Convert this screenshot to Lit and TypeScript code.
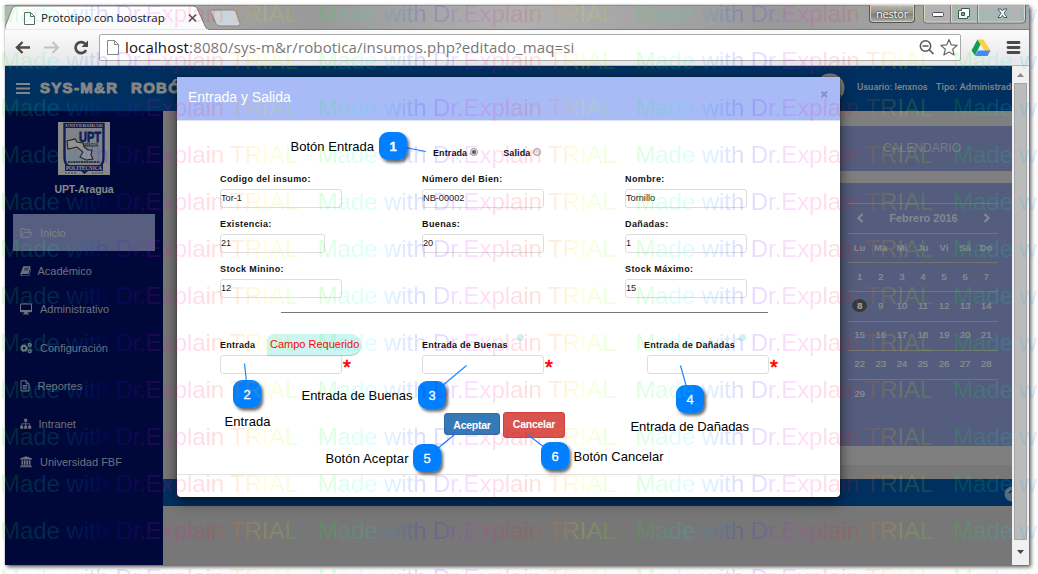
import { LitElement, html, svg, css } from "lit";
import { customElement } from "lit/decorators.js";

const MENU = [
  { t: "Inicio", i: "folder", cls: "active" },
  { t: "Académico", i: "book", cls: "tight" },
  { t: "Administrativo", i: "desktop", cls: "" },
  { t: "Configuración", i: "cogs", cls: "" },
  { t: "Reportes", i: "file", cls: "tight" },
  { t: "Intranet", i: "sitemap", cls: "snug" },
  { t: "Universidad FBF", i: "bank", cls: "" },
];

const ICONS: Record<string, unknown> = {
  folder: svg`<path d="M1 9.6V2.6q0-1 1-1h2.3q.8 0 .8 1h3.700q.9 0 .9 1V5M1.200 10.200h7.400q.7 0 1.100-.6l2-3.600q.3-.7-.4-.7H4.600q-.7 0-1.100.6L1 9.800z" fill="none" stroke="currentColor" stroke-width="1"/>`,
  book: svg`<path d="M3.200 1.200h6.800l.6.600-2.300 7.200H2.100q-.8 0-.6.700.2.700 1 .700h6l2.200-6.900.4.600-2.100 7H1.800Q.2 11 .4 9z" fill="currentColor"/><path d="M4.600 3.400h4M4.100 5h4" stroke="#000933" stroke-width=".7"/>`,
  desktop: svg`<path d="M1 .6h10q1 0 1 1v6.700q0 1-1 1H7.600l.4 1.500H9v.8H3v-.8h1l.4-1.500H1q-1 0-1-1V1.600q0-1 1-1zM1 1.600v5.400h10V1.600z" fill="currentColor" fill-rule="evenodd"/>`,
  cogs: svg`<circle cx="4" cy="6.300" r="2.300" fill="none" stroke="currentColor" stroke-width="1.800"/><circle cx="4" cy="6.300" r="3.500" fill="none" stroke="currentColor" stroke-width="1" stroke-dasharray="1.500 1.250"/><circle cx="9.800" cy="3" r="1.300" fill="none" stroke="currentColor" stroke-width="1.200"/><circle cx="9.800" cy="3" r="2" fill="none" stroke="currentColor" stroke-width=".8" stroke-dasharray="1.100 1"/><circle cx="9.800" cy="9.200" r="1.300" fill="none" stroke="currentColor" stroke-width="1.200"/><circle cx="9.800" cy="9.200" r="2" fill="none" stroke="currentColor" stroke-width=".8" stroke-dasharray="1.100 1"/>`,
  file: svg`<path d="M1 .8h5.200L9 3.600v7.400H1zM6 .8v3h3M2.800 5.500h4.400M2.800 7.200h4.400M2.800 8.900h4.400" fill="none" stroke="currentColor" stroke-width="1"/>`,
  sitemap: svg`<path d="M4.200.800h3v3h-3zM.2 7.800h3v3h-3zM4.200 7.800h3v3h-3zM8.200 7.800h3v3h-3z" fill="currentColor"/><path d="M5.700 3.500v4.500M1.700 8V5.800h8V8" fill="none" stroke="currentColor" stroke-width=".8"/>`,
  bank: svg`<path d="M6 .2L12 2.600v.9H0v-.9zM1.500 4.200h1.700v4.600H1.500zM4 4.200h1.600v4.600H4zM6.400 4.200H8v4.600H6.400zM8.800 4.200h1.700v4.600H8.800zM.8 9h10.400v.8H.8zM0 10.200h12v1H0z" fill="currentColor"/>`,
};

const FIELDS = [
  ["Codigo del insumo:", "Tor-1"], ["Número del Bien:", "NB-00002"], ["Nombre:", "Tornillo"],
  ["Existencia:", "21"], ["Buenas:", "20"], ["Dañadas:", "1"],
  ["Stock Minino:", "12"], null, ["Stock Máximo:", "15"],
] as (string[] | null)[];

const WEEKS = [
  ["Lu", "Ma", "Mi", "Ju", "Vi", "Sá", "Do"],
  ["1", "2", "3", "4", "5", "6", "7"],
  ["8", "9", "10", "11", "12", "13", "14"],
  ["15", "16", "17", "18", "19", "20", "21"],
  ["22", "23", "24", "25", "26", "27", "28"],
  ["29", "", "", "", "", "", ""],
];

const CALLOUTS = [
  { n: 1, x: 379, y: 132, t: "Botón Entrada", tx: 290.500, ty: 151, w: 83.500, l: [405, 147.500, 426, 151.500] },
  { n: 2, x: 233, y: 380, t: "Entrada", tx: 224.500, ty: 426, w: 46, l: [246.500, 382, 244.500, 363.500] },
  { n: 3, x: 418, y: 381, t: "Entrada de Buenas", tx: 301.500, ty: 400, w: 111, l: [442, 386, 466.500, 365.500] },
  { n: 4, x: 676, y: 385, t: "Entrada de Dañadas", tx: 630.500, ty: 431, w: 118.500, l: [686.500, 387, 680.500, 365.500] },
  { n: 5, x: 413, y: 444, t: "Botón Aceptar", tx: 325.500, ty: 463, w: 83, l: [437, 449, 456.500, 433] },
  { n: 6, x: 541, y: 442, t: "Botón Cancelar", tx: 573.500, ty: 461, w: 90, l: [544, 447, 527, 434] },
];

@customElement("dialog-entry")
class DialogEntry extends LitElement {
  static styles = css`
    :host { display: flex; flex-direction: column; width: 663px; height: 420px; box-sizing: border-box;
      background: #fff; border-radius: 0 0 4px 4px; box-shadow: 0 4px 14px rgba(0,0,0,.62), 0 0 2px rgba(0,0,0,.4);
      font-family: "Liberation Sans", Arial, sans-serif; color: #111; }
    .head { height: 43px; box-sizing: border-box; background: #a9bbf6; display: flex;
      justify-content: space-between; padding: 0 11px 3px; align-items: center; color: #fff; font-size: 14px; box-shadow: 0 1px #e0e3ea; }
    .close { color: #8592c2; width: 9px; height: 9px; margin-top: -5px; }
    .body { height: 354px; padding: 27px 0 0 43px; box-sizing: border-box; }
    .radios { display: flex; padding-left: 213px; height: 12px; align-items: center; margin-bottom: 14px; }
    .radios .lab { letter-spacing: .1px; }
    .radios .second { margin-left: 25px; }
    .lab { font-weight: bold; font-size: 9px; letter-spacing: .38px; line-height: 12px; white-space: nowrap; }
    .entries .lab { letter-spacing: .25px; }
    .radio { width: 8px; height: 8px; box-sizing: border-box; border: 1px solid #999; border-radius: 50%;
      background: #e8e8e8; margin: -3px 0 0 3px; display: flex; align-items: center; justify-content: center; }
    .radio.on::after { content: ""; width: 4px; height: 4px; border-radius: 50%; background: #555; }
    .grid { display: grid; grid-template-columns: 202px 203px 150px; row-gap: 10px; }
    .cell { height: 35px; }
    .box { width: 122px; height: 19px; box-sizing: border-box; border: 1px solid #ddd; border-radius: 3px;
      margin-top: 4px; font-size: 9.200px; line-height: 16px; padding-left: 0; color: #222; }
    .box.narrow { width: 105px; }
    .rule { width: 487px; height: 1px; background: #777; margin: 14px 0 26px 61px; }
    .entries { display: grid; grid-template-columns: 202px 222px 150px; }
    .entry { position: relative; height: 35px; }
    .line { display: flex; }
    .shift { margin-left: 3px; }
    .star { color: #f00; font-size: 20px; line-height: 20px; margin: 6px 0 0 1px; height: 17px; -webkit-text-stroke: .6px #f00; }
    .tip { position: absolute; left: 47px; top: -5px; width: 94px; height: 21px; background: #cdf5f2;
      border-radius: 8px 11px 11px 0; box-shadow: 0 1px 1px #aac6c4; color: #f00; font-size: 11px; line-height: 21px;
      text-indent: 3px; white-space: nowrap; }
    .dot { position: absolute; left: 95px; top: -5px; width: 7px; height: 7px; border-radius: 50%; background: #cdf3f0; }
    .dot.far { left: 95px; }
    .actions { display: flex; gap: 3px; padding-left: 224px; margin-top: 38px; align-items: flex-start; }
    .btn { box-sizing: border-box; color: #fff; font-weight: bold; font-size: 10.500px; letter-spacing: -.25px;
      text-align: center; border-radius: 3px; }
    .ok { width: 56px; height: 22px; background: #337ab7; border: 1px solid #2e6da4; line-height: 23px; margin-top: 1px; }
    .no { width: 62px; height: 26px; background: #d9534f; border: 1px solid #d43f3a; line-height: 23px; }
    .foot { border-top: 1px solid #e2e2e2; flex: 1; }
  `;
  render() {
    return html`
      <div class="head"><span>Entrada y Salida</span>
        <svg class="close" viewBox="0 0 9 9"><path d="M1.500 1.500l5.500 5.500M7 1.500L1.500 7" stroke="currentColor" stroke-width="1.900"/></svg></div>
      <div class="body">
        <div class="radios"><span class="lab">Entrada</span><span class="radio on"></span>
          <span class="lab second">Salida</span><span class="radio"></span></div>
        <div class="grid">${FIELDS.map((f, i) => f
          ? html`<div class="cell"><div class="lab">${f[0]}</div><div class="box ${i === 3 ? "narrow" : ""}">${f[1]}</div></div>`
          : html`<div class="cell"></div>`)}</div>
        <div class="rule"></div>
        <div class="entries">
          <div class="entry"><div class="lab">Entrada</div><div class="line"><div class="box"></div><span class="star">*</span></div><div class="tip">Campo Requerido</div></div>
          <div class="entry"><div class="lab">Entrada de Buenas</div><div class="line"><div class="box"></div><span class="star">*</span></div><i class="dot"></i></div>
          <div class="entry"><div class="lab">Entrada de Dañadas</div><div class="line shift"><div class="box"></div><span class="star">*</span></div><i class="dot far"></i></div>
        </div>
        <div class="actions"><div class="btn ok">Aceptar</div><div class="btn no">Cancelar</div></div>
      </div>
      <div class="foot"></div>`;
  }
}

@customElement("app-root")
class AppRoot extends LitElement {
  static styles = css`
    :host { display: block; position: relative; width: 1038px; height: 574px; overflow: hidden; background: #fff;
      box-sizing: border-box; padding: 5px 0 0 5px; font-family: "Liberation Sans", Arial, sans-serif; }
    .window { width: 1024px; height: 560px; display: flex; flex-direction: column; box-shadow: 2px 2px 4px rgba(0,0,0,.65), 0 0 1px #888; }
    .strip { height: 24px; background: linear-gradient(#b0b0b0, #a2a2a2); position: relative; display: flex; border-bottom: 1px solid #808080; }
    .shapes { position: absolute; inset: 0; width: 1024px; height: 25px; }
    .tabtext { position: relative; padding-left: 36px; font: 11.500px/25px "Open Sans", sans-serif; color: #111; width: 797px; letter-spacing: -.04px; white-space: nowrap; }
    .user { position: relative; margin-left: 31px; width: 46px; height: 18px; box-sizing: border-box; border: 1px solid #555;
      border-top: 0; border-radius: 0 0 4px 4px; background: linear-gradient(#b5b5b5, #909090 50%, #777 51%, #b0b0b0);
      box-shadow: inset 0 0 0 1px #ccc; color: #fff; text-shadow: 0 0 2px #000; font: 11px/17px "Open Sans", sans-serif; letter-spacing: -.2px; text-align: center; }
    .toolbar { height: 36px; box-sizing: border-box; background: linear-gradient(#fbfbfb, #e6e6e6); border-bottom: 1px solid #b5b5b5; display: flex; padding: 4px 0 0; }
    .nav { width: 94px; height: 28px; flex: none; }
    .omni { width: 862px; height: 27px; box-sizing: border-box; border: 1px solid #aaa; border-radius: 2px; background: #fff;
      display: flex; align-items: center; flex: none; }
    .omni svg { flex: none; }
    .url { font: 15px/25px "Open Sans", sans-serif; letter-spacing: .14px; color: #777; width: 787px; padding-left: 5px; white-space: nowrap; }
    .url b { font-weight: normal; color: #111; }
    .page { flex: 1; display: flex; position: relative; min-height: 0; }
    .site { width: 1007px; display: flex; flex-direction: column; overflow: hidden; background: #777; }
    .navbar { height: 45px; background: #003060; display: flex; align-items: center; flex: none; color: #858585; white-space: nowrap; }
    .burger { width: 14px; height: 13px; margin: 0 11px 0 11px; flex: none; }
    .brand { font-weight: bold; font-size: 15px; letter-spacing: 1.300px; -webkit-text-stroke: 1px #858585; width: 91px; margin-top: -3px; margin-left: -1px; flex: none; }
    .brand.sec { width: 683px; margin-left: 0; }
    .avatar { width: 30px; height: 30px; margin: -1px 10px 0 1px; flex: none; }
    .who { font: 500 9.500px/12px Roboto, sans-serif; margin: -3px 8px 0 0; flex: none; }
    .avatar + .who { margin-left: 2px; }
    .cols { display: flex; flex: 1; }
    .side { width: 158px; background: #00083a; flex: none; color: #777; }
    .logo { display: block; width: 52px; height: 53px; margin: 11px 0 0 53px; }
    .org { font-weight: bold; font-size: 10.500px; letter-spacing: -.1px; text-align: center; color: #888; line-height: 14px; margin-top: 7px; }
    .menu { display: flex; flex-direction: column; gap: 1px; margin-top: 18px; }
    .item { height: 37.300px; width: 142px; margin-left: 8px; box-sizing: border-box; padding-left: 7px; display: flex; align-items: center; font-size: 11px; color: #6f727c; }
    .item svg { width: 12px; height: 12px; margin-right: 8px; }
    .item.tight svg { margin-right: 5.500px; }
    .item.snug svg { margin-right: 6.500px; }
    .item.active { background: #565f7f; color: #7f8288; }
    .main { flex: 1; display: flex; flex-direction: column; min-width: 0; }
    .upper { height: 368px; display: flex; justify-content: flex-end; flex: none; }
    .right { width: 190px; height: 354px; background: #7f7f7f; padding-top: 15px; box-sizing: border-box; }
    .title { height: 45px; background: #545d7d; color: #777c86; font-size: 12px; line-height: 44px; padding-left: 61px; margin-bottom: 12px; }
    .cal { height: 263px; background: #545d7d; padding: 20px 14px 0 26px; box-sizing: border-box; color: #858890; }
    .month { height: 30px; box-sizing: border-box; border-top: 1px solid #737470; display: flex; align-items: center; justify-content: space-between;
      padding: 0 7px 2px 8px; font-size: 11px; font-weight: bold; }
    .month svg { width: 8px; height: 10px; }
    .week { display: grid; grid-template-columns: repeat(7, 21.100px); height: 29.200px; box-sizing: border-box; border-top: 1px solid #737470;
      font-size: 9.500px; font-weight: bold; align-items: center; text-align: center; padding: 0 0 2px 1px; }
    .week.days { font-size: 9.500px; font-weight: normal; text-shadow: .3px 0 currentColor; }
    .today { background: #373838; color: #999; border-radius: 50%; width: 15px; height: 13px; line-height: 13px; margin: auto; font-weight: bold; }
    .bar { height: 27px; background: #003060; display: flex; justify-content: flex-end; align-items: center; flex: none; }
    .up { width: 8px; height: 16px; margin-top: 3px; }
    .scroll { width: 17px; background: #f0f0f0; display: flex; flex-direction: column; align-items: center; }
    .scroll svg { width: 17px; height: 17px; flex: none; }
    .thumb { width: 13px; height: 457px; box-sizing: border-box; border: 1px solid #a5a5a5; background: #bbb; }
    .modal { position: absolute; left: 172px; top: 11px; }
    .overlay { position: absolute; left: 0; top: 0; width: 1038px; height: 574px; pointer-events: none; }
  `;

  chrome() {
    return html`
      <div class="strip">
        <svg class="shapes" viewBox="5 5 1024 25">
          <defs>
            <linearGradient id="tab" x2="0" y2="1"><stop stop-color="#fff"/><stop offset="1" stop-color="#f9f9f9"/></linearGradient>
            <linearGradient id="stripg"><stop stop-color="#b6b6b6"/><stop offset=".3" stop-color="#999"/><stop offset=".5" stop-color="#b0b0b0"/><stop offset=".75" stop-color="#999"/><stop offset="1" stop-color="#aaa"/></linearGradient>
          </defs>
          <rect x="5" y="5" width="1024" height="24" fill="url(#stripg)"/>
          <path d="M5 5h1024" stroke="#777" />
          <path d="M5 30V27L12 9q1-3 4-3H193q3 0 4.500 3l8 18q1 2.500 4 2.500V30z" fill="url(#tab)" stroke="#777" stroke-width=".9"/>
          <path d="M5 29.800H208" stroke="#f9f9f9"/>
          <path d="M212 10h21q2 0 3 2l4 11q1 3-2 3h-18q-3 0-4-2.500l-5-11q-1-2.500 1-2.500z" fill="#ccd3da" stroke="#858585"/>
          <path d="M24.500 12.500h6l4 4v8h-10zM30.500 12.500v4h4" fill="#fff" stroke="#666"/>
          <path d="M189 14.500l7 7M196 14.500l-7 7" stroke="#555" stroke-width="1.600"/>
          <path d="M923.500 5v15q0 3 3 3h96q3 0 3-3V5" fill="#b3b3b3" stroke="#666"/>
          <path d="M924.500 5v14q0 3 2 3h95q3 0 3-3V5M951.500 5v17M978.500 5v17" fill="none" stroke="#ddd" stroke-width=".8"/>
          <path d="M950.500 5v18M977.500 5v18" stroke="#777"/>
          <rect x="932.500" y="12.500" width="11" height="4" rx="1" fill="#fff" stroke="#444c58"/>
          <path d="M961.500 8.500h8v8h-2v2h-9v-8h3z" fill="#fff" stroke="#444c58"/><path d="M961.500 12.500h3v3h-3z" fill="#999" stroke="#444c58"/>
          <path d="M998 9h3l1.500 2 1.500-2h3l-3 4.200 3 4.300h-3l-1.500-2.200-1.500 2.200h-3l3-4.300z" fill="#fff" stroke="#444c58" stroke-width=".9"/>
        </svg>
        <div class="tabtext">Prototipo con boostrap</div><div class="user">nestor</div>
      </div>
      <div class="toolbar">
        <svg class="nav" viewBox="5 34 94 28">
          <path d="M30 47.500H18M22.500 42l-5.500 5.500 5.500 5.500" fill="none" stroke="#4a4a4a" stroke-width="2.400"/>
          <path d="M44 47.500h13M52.500 42l5.500 5.500-5.500 5.500" fill="none" stroke="#c2c2c2" stroke-width="2"/>
          <path d="M85.500 44.300A5.500 5.500 0 1 0 86 50" fill="none" stroke="#4a4a4a" stroke-width="2.700"/><path d="M88 40.500v6.500h-6.500z" fill="#4a4a4a"/>
        </svg>
        <div class="omni">
          <svg width="20" height="25" viewBox="100 35 20 25"><path d="M107.500 40.500h7l4 4v10h-11zM114.500 40.500v4h4" fill="#fff" stroke="#888"/></svg>
          <div class="url"><b>localhost</b>:8080/sys-m&amp;r/robotica/insumos.php?editado_maq=si</div>
          <svg width="48" height="25" viewBox="912 35 48 25">
            <circle cx="925.500" cy="46" r="5.200" fill="#fff" stroke="#555" stroke-width="1.500"/><path d="M922.500 46h6M929.500 50l4 4" stroke="#555" stroke-width="1.600"/>
            <path d="M949 39.500l2.300 5.400 5.900.5-4.500 3.900 1.400 5.700-5.100-3-5.100 3 1.400-5.700-4.500-3.900 5.900-.5z" fill="#fff" stroke="#666" stroke-width="1.200" stroke-linejoin="round"/>
          </svg>
        </div>
        <svg width="68" height="28" viewBox="961 34 68 28">
          <path d="M977.500 39.500h6l7.500 12h-6z" fill="#ffcf43"/><path d="M978 50.500h12.500l-3 5.500h-12.500z" fill="#4688f4"/><path d="M977.500 39.500l3 5-5.500 11-3.500-5z" fill="#0f9d58"/>
          <path d="M1008 42.500h11M1008 47.500h11M1008 52.500h11" stroke="#4a4a4a" stroke-width="2.800" stroke-linecap="round"/>
        </svg>
      </div>`;
  }

  logo() {
    return html`<svg class="logo" viewBox="0 0 52 53">
      <rect width="52" height="53" fill="#898989"/>
      <path d="M6.500 2h39v34q0 9-8 9.500-7 .500-11 5-4-4.500-11-5-9-.500-9-9.500z" fill="#7e828b" stroke="#102057" stroke-width="2.400"/>
      <rect x="6" y="1" width="40" height="5" fill="#102057"/>
      <text x="26" y="5.300" font-size="5" font-family="Liberation Serif, serif" font-weight="bold" fill="#999" text-anchor="middle" textLength="37">UNIVERSIDAD</text>
      <text x="21" y="20" font-size="15" font-weight="bold" font-family="Liberation Sans, sans-serif" fill="#102057" stroke="#102057" stroke-width=".8" textLength="22" lengthAdjust="spacingAndGlyphs">UPT</text>
      <path d="M9 19l8-2 2 3 6 1 1 4 4 3 4 0-1 5 2 4-7 1-6-3 3-5-6-5-9 2z" fill="#929292" stroke="#222" stroke-width="1.100"/>
      <text x="26" y="25" font-size="4.500" font-weight="bold" font-family="Liberation Sans, sans-serif" fill="#111" textLength="14" lengthAdjust="spacingAndGlyphs">ARAGUA</text>
      <path d="M10 40h32" stroke="#333" stroke-width="2" stroke-dasharray="2 .6"/>
      <rect x="7" y="43" width="38" height="6" fill="#102057"/>
      <text x="26" y="48" font-size="6" font-family="Liberation Serif, serif" font-weight="bold" fill="#999" text-anchor="middle" textLength="36" lengthAdjust="spacingAndGlyphs">POLITECNICA</text>
      <path d="M23 48h7l-3.500 4z" fill="#102057"/><path d="M7 51h12M34 51h12" stroke="#444" stroke-dasharray="2 1"/>
    </svg>`;
  }

  render() {
    const rows = Array.from({ length: 13 }, (_, i) => 21.600 + i * 47);
    const cols = [0, 1, 2, 3];
    const hues = Array.from({ length: 13 }, (_, i) => i);
    return html`
      <div class="window">
        ${this.chrome()}
        <div class="page">
          <div class="site">
            <div class="navbar">
              <svg class="burger" viewBox="0 0 14 13"><path d="M0 2h14M0 6.500h14M0 11h14" stroke="#858585" stroke-width="2"/></svg>
              <span class="brand">SYS-M&amp;R</span><span class="brand sec">ROBÓTICA</span>
              <svg class="avatar" viewBox="0 0 30 30"><circle cx="15" cy="15" r="14.500" fill="#7e7e7e"/><circle cx="14" cy="13" r="6.500" fill="#223"/><path d="M4 25q3-7 10-7t13 5q-6 8-13 6z" fill="#344155"/></svg>
              <span class="who">Usuario: lenxnos</span><span class="who">Tipo: Administrador</span>
            </div>
            <div class="cols">
              <div class="side">
                ${this.logo()}
                <div class="org">UPT-Aragua</div>
                <div class="menu">${MENU.map((m) => html`<div class="item ${m.cls}"><svg viewBox="0 0 12 12">${ICONS[m.i]}</svg>${m.t}</div>`)}</div>
              </div>
              <div class="main">
                <div class="upper"><div class="right">
                  <div class="title">CALENDARIO</div>
                  <div class="cal">
                    <div class="month"><svg viewBox="0 0 8 10"><path d="M6.500 1L2.500 5l4 4" fill="none" stroke="currentColor" stroke-width="2.200"/></svg>Febrero 2016<svg viewBox="0 0 8 10"><path d="M1.500 1l4 4-4 4" fill="none" stroke="currentColor" stroke-width="2.200"/></svg></div>
                    ${WEEKS.map((w, i) => html`<div class="week ${i ? "days" : ""}">${w.map((d) => d === "8" ? html`<span class="today">8</span>` : html`<span>${d}</span>`)}</div>`)}
                  </div>
                </div></div>
                <div class="bar"><svg class="up" viewBox="0 0 8 16"><circle cx="8" cy="8" r="7.500" fill="#55697f"/><path d="M5 7l3-2.500" stroke="#222" stroke-width="1.300"/></svg></div>
              </div>
            </div>
          </div>
          <div class="scroll">
            <svg viewBox="0 0 17 17"><path d="M5 11h7L8.500 7z" fill="#8a8a8a"/></svg>
            <div class="thumb"></div>
            <svg viewBox="0 0 17 17"><path d="M5 10h7l-3.500 4z" fill="#444"/></svg>
          </div>
          <dialog-entry class="modal"></dialog-entry>
        </div>
      </div>
      <svg class="overlay" viewBox="0 0 1038 574">
        <defs>
          <filter id="sh" x="-30%" y="-30%" width="180%" height="180%"><feDropShadow dx="2" dy="2.500" stdDeviation="1.500" flood-opacity=".6"/></filter>
          <linearGradient id="rainbow" gradientUnits="userSpaceOnUse" x1="0" y1="0" x2="317.700" y2="0" spreadMethod="repeat">
            ${hues.map((h) => svg`<stop offset=${h / 12} stop-color=${`hsl(${(120 + h * 30) % 360},100%,50%)`}/>`)}
          </linearGradient>
        </defs>
        <g font-family="Liberation Sans, Arial, sans-serif" font-size="13">
          ${CALLOUTS.map((c) => svg`
            <line x1=${c.l[0]} y1=${c.l[1]} x2=${c.l[2]} y2=${c.l[3]} stroke="#1a88ff" stroke-width="1.200"/>
            <rect x=${c.x} y=${c.y} width="28" height="28" rx="9" fill="#0080ff" filter="url(#sh)"/>
            <text x=${c.x + 14} y=${c.y + 18.500} text-anchor="middle" fill="#fff" font-size="13" font-weight=${c.n === 1 ? "bold" : "normal"} stroke="#fff" stroke-width=".3">${c.n}</text>
            <text x=${c.tx} y=${c.ty} textLength=${c.w} fill="#000">${c.t}</text>`)}
        </g>
        <g fill="url(#rainbow)" opacity=".13" font-family="Liberation Sans, Arial, sans-serif" font-size="24">
          ${rows.map((y) => cols.map((c) => svg`<text x=${c * 317.700} y=${y} textLength="298">Made with Dr.Explain TRIAL</text>`))}
        </g>
      </svg>`;
  }
}
